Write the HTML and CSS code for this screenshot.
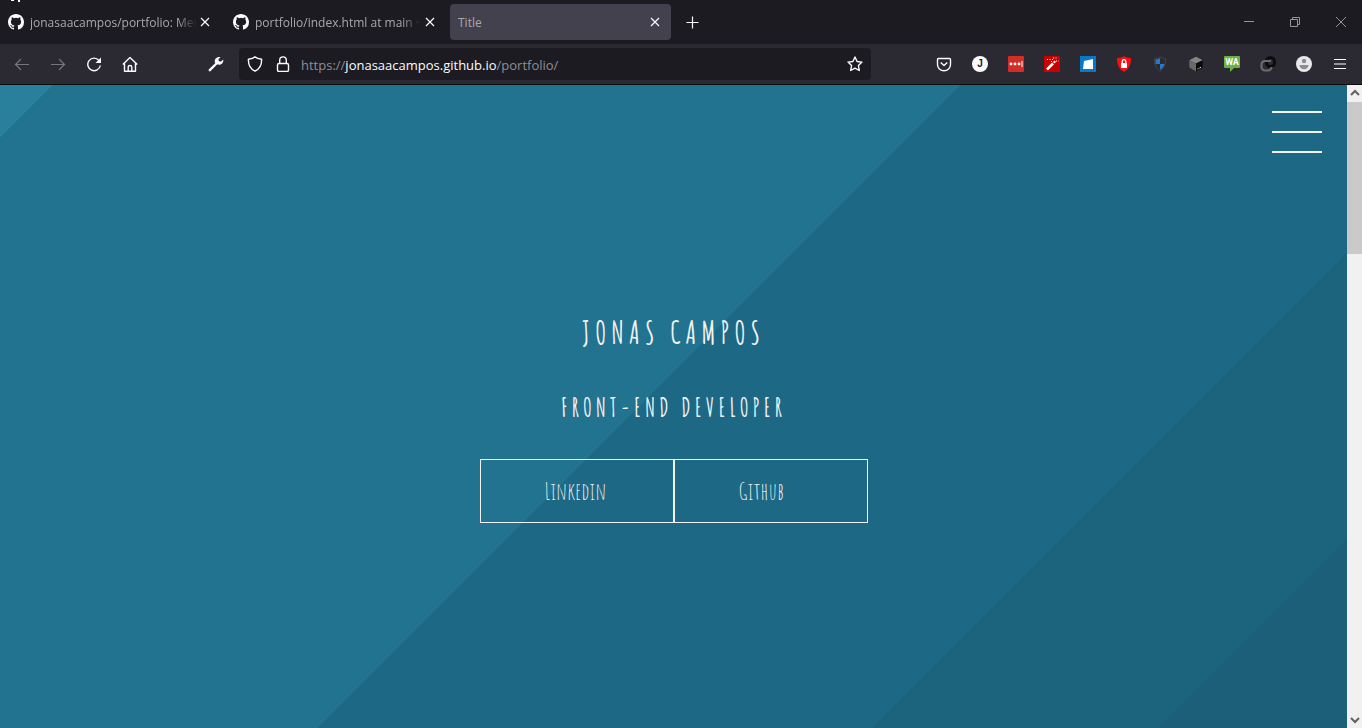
FILE: index.html
```html
<!DOCTYPE html>
<html lang="pt-BR">
<head>
<meta charset="utf-8">
<title>Title</title>
<link rel="stylesheet" href="styles.css">
</head>
<body>
<svg class="defs" aria-hidden="true">
  <symbol id="github" viewBox="0 0 16 16"><path fill="currentColor" d="M8 0C3.58 0 0 3.58 0 8c0 3.54 2.29 6.53 5.47 7.59.4.07.55-.17.55-.38 0-.19-.01-.82-.01-1.49-2.01.37-2.53-.49-2.69-.94-.09-.23-.48-.94-.82-1.13-.28-.15-.68-.52-.01-.53.63-.01 1.08.58 1.23.82.72 1.21 1.87.87 2.33.66.07-.52.28-.87.51-1.07-1.78-.2-3.64-.89-3.64-3.95 0-.87.31-1.59.82-2.15-.08-.2-.36-1.02.08-2.12 0 0 .67-.21 2.2.82a7.6 7.6 0 0 1 4 0c1.53-1.04 2.2-.82 2.2-.82.44 1.1.16 1.92.08 2.12.51.56.82 1.27.82 2.15 0 3.07-1.87 3.75-3.65 3.95.29.25.54.73.54 1.48 0 1.07-.01 1.93-.01 2.2 0 .21.15.46.55.38A8 8 0 0 0 16 8c0-4.42-3.58-8-8-8z"/></symbol>
  <symbol id="close" viewBox="0 0 16 16"><path class="line" d="M4 4l8 8M12 4l-8 8"/></symbol>
</svg>

<header class="browser">
  <svg class="edge-marks" viewBox="0 0 24 2" aria-hidden="true"><path fill="#fff" d="M11 0h3v1h-3zM18 0h2v2h-2z"/></svg>
  <div class="tabs">
    <div class="tab">
      <svg class="icon"><use href="#github"/></svg>
      <span class="tab-label faded">jonasaacampos/portfolio: Meu p</span>
      <button class="tab-close" aria-label="Close tab"><svg class="icon"><use href="#close"/></svg></button>
    </div>
    <div class="tab">
      <svg class="icon"><use href="#github"/></svg>
      <span class="tab-label faded">portfolio/index.html at main · jo</span>
      <button class="tab-close" aria-label="Close tab"><svg class="icon"><use href="#close"/></svg></button>
    </div>
    <div class="tab active">
      <span class="tab-label">Title</span>
      <button class="tab-close" aria-label="Close tab"><svg class="icon"><use href="#close"/></svg></button>
    </div>
    <button class="new-tab" aria-label="New tab"><svg class="icon" viewBox="0 0 16 16"><path class="line" d="M8.500 2.500v12M2.500 8.500h12"/></svg></button>
    <div class="window-controls">
      <button aria-label="Minimize"><svg class="icon" viewBox="0 0 16 16"><path class="hair" d="M3 7.500h10"/></svg></button>
      <button aria-label="Restore"><svg class="icon" viewBox="0 0 16 16"><path class="hair" d="M3.500 5.500h7v7h-7zM5.500 5.500v-2h7v7h-2"/></svg></button>
      <button aria-label="Close window"><svg class="icon" viewBox="0 0 16 16"><path class="hair" d="M3 3l10 10M13 3L3 13"/></svg></button>
    </div>
  </div>

  <div class="toolbar">
    <div class="nav">
      <button class="dim" aria-label="Back"><svg class="icon" viewBox="0 0 16 16"><path class="line" d="M15 8.500H1.500M7 3L1.500 8.500 7 14"/></svg></button>
      <button class="dim" aria-label="Forward"><svg class="icon" viewBox="0 0 16 16"><path class="line" d="M1 8.500h13.500M9 3L14.500 8.500 9 14"/></svg></button>
      <button aria-label="Reload"><svg class="icon" viewBox="0 0 16 16"><path class="bold" d="M13 4.500A6.300 6.300 0 1 0 14.300 9.500"/><path fill="currentColor" d="M15 1.500V7H9.500z"/></svg></button>
      <button aria-label="Home"><svg class="icon" viewBox="0 0 16 16"><path class="bold" d="M.8 8.500L8 1.500l7.200 7M2.500 7.500v7.800h11V7.500M6.200 15v-3.700a1.800 1.800 0 0 1 3.600 0V15"/></svg></button>
    </div>
    <button class="wrench" aria-label="Developer tools"><svg class="icon" viewBox="0 0 16 16"><path d="M1.800 14.200L9 7" fill="none" stroke="currentColor" stroke-width="2.400" stroke-linecap="round"/><path fill="currentColor" d="M12.500 1.200L10.500 3l.3 2.300 2.300.3 2.100-2.100c.7 3.400-2.400 6.400-6 4.800L6.900 6.400C6 3 9 .5 12.500 1.200z"/></svg></button>
    <div class="urlbar">
      <svg class="icon" viewBox="0 0 16 16"><path class="bold" d="M8 .9c1.500 1.300 3.700 2 6.600 2.300C14.800 8.500 13 12.800 8 15.200 3 12.800 1.200 8.500 1.400 3.200 4.300 2.900 6.500 2.200 8 .9z"/></svg>
      <svg class="icon" viewBox="0 0 16 16"><rect class="bold" x="2.500" y="7.500" width="11" height="8" rx="1.500"/><path class="bold" d="M4.700 7.500V4.200a3.300 3.300 0 0 1 6.600 0v3.300"/></svg>
      <span class="url">https://<b>jonasaacampos.github.io</b>/portfolio/</span>
      <button aria-label="Bookmark"><svg class="icon" viewBox="0 0 16 16"><path class="bold" d="M8 1l2.100 4.500 4.900.6-3.600 3.400.9 5L8 12.100l-4.300 2.400.9-5L1 6.100l4.900-.6z"/></svg></button>
    </div>
    <div class="extensions">
      <button aria-label="Pocket"><svg class="icon" viewBox="0 0 16 16"><path class="bold" d="M2.500 2.500h11q1 0 1 1V8.500a6.500 6.200 0 0 1-13 0V3.500q0-1 1-1zM4.700 6.500L8 9.600l3.300-3.100"/></svg></button>
      <button aria-label="J"><span class="account">J</span></button>
      <button aria-label="Passwords"><svg class="icon" viewBox="0 0 16 16"><rect width="16" height="16" rx="1" fill="#d32d27"/><g fill="#fff"><circle cx="3" cy="8" r="1.400"/><circle cx="7" cy="8" r="1.400"/><circle cx="11" cy="8" r="1.400"/><path d="M13.500 5h1v6h-1z"/></g></svg></button>
      <button aria-label="Wand"><svg class="icon" viewBox="0 0 16 16"><path fill="#c70000" d="M0 0h16v16H0z"/><path stroke="#fff" stroke-width="2.500" d="M3 13.500l6-6"/><path stroke="#fff" stroke-width="2" d="M9.700 6.800l1.600-1.600"/><path stroke="#fff" stroke-dasharray="1 1.500" d="M3 3.500h7M7 5.500h2M9 2h5M12 5h3"/></svg></button>
      <button aria-label="Page tool"><svg class="icon" viewBox="0 0 16 16"><path fill="#0878c7" d="M0 0h16v16H0z"/><path fill="#fff" d="M4 5l9-2v10H3z"/></svg></button>
      <button aria-label="Privacy lock"><svg class="icon" viewBox="0 0 16 16"><path fill="#f80d12" d="M8 0c2 1.400 4.500 1.900 7 2 .2 6-1.800 11-7 14C2.800 13 .8 8 1 2c2.500-.1 5-.6 7-2z"/><path fill="#fff" d="M5 7h6v5H5z"/><path fill="none" stroke="#fff" stroke-width="1.300" d="M6.200 7V5.500a1.800 1.800 0 0 1 3.600 0V7"/></svg></button>
      <button aria-label="Shield"><svg class="icon" viewBox="0 0 16 16"><path fill="#2b2c32" stroke="#42454a" d="M8 .8c2 1.300 3.500 1.500 5.500 1.600.2 5.600-1 9.800-5.500 12.800C3.500 12.200 2.300 8 2.500 2.400 4.500 2.300 6 2.100 8 .8z"/><path fill="#2677cf" d="M8 2v6H3.500V3.500C5.500 3.400 6.500 3 8 2zM8 8h4.500c-.5 2.500-2 4.500-4.500 6z"/></svg></button>
      <button aria-label="Cube"><svg class="icon" viewBox="0 0 16 16"><path fill="#858585" d="M8 .8l6.700 3.400L8 7.500 1.300 4.200z"/><path fill="#696969" d="M1.300 4.200L8 7.500v8l-6.700-4z"/><path fill="#0b0b0b" d="M14.700 4.200L8 7.500v8l6.700-4z"/><path stroke="#ddd" d="M9.500 13l1-.5M11.500 12l1.500-.8"/></svg></button>
      <button aria-label="WA"><span class="bubble">WA</span></button>
      <button aria-label="Links"><svg class="icon" viewBox="0 0 16 16"><rect x="6.500" y="1.500" width="8" height="9" rx="4" fill="none" stroke="#0c0c0d" stroke-width="3"/><path fill="none" stroke="#6c6c6e" stroke-width="2.200" d="M11 5H5a3.500 3.500 0 0 0-3.500 3.500V11A3.500 3.500 0 0 0 5 14.500h3a3.500 3.500 0 0 0 3.500-3.500"/></svg></button>
      <button aria-label="Profile"><svg class="icon" viewBox="0 0 16 16"><circle cx="8" cy="8" r="8" fill="#e9e9ed"/><circle cx="8" cy="5" r="2.200" fill="#8d8d90"/><path fill="#8d8d90" d="M3.500 9h9c0 2.500-2 4.200-4.500 4.200S3.500 11.500 3.500 9z"/></svg></button>
      <button aria-label="Menu"><svg class="icon" viewBox="0 0 16 16"><path class="line" d="M2 3.500h12M2 8h12M2 12.500h12"/></svg></button>
    </div>
  </div>
</header>

<div class="viewport">
  <main class="hero">
    <button class="menu" aria-label="Menu"><span></span><span></span><span></span></button>
    <h1>JONAS CAMPOS</h1>
    <h2>FRONT-END DEVELOPER</h2>
    <nav class="links">
      <a href="#linkedin">Linkedin</a>
      <a href="#github-profile">Github</a>
    </nav>
  </main>
  <div class="scrollbar">
    <svg class="arrow" viewBox="0 0 15 17"><path d="M4 10l4-4 4 4"/></svg>
    <div class="track"><div class="thumb"></div></div>
    <svg class="arrow" viewBox="0 0 15 17"><path d="M4 7l4 4 4-4"/></svg>
  </div>
</div>
</body>
</html>
```
FILE: styles.css
```css
* { box-sizing: border-box; }

body {
  margin: 0;
  height: 100vh;
  display: flex;
  flex-direction: column;
  overflow: hidden;
  background: #1c1b22;
  color: #fbfbfe;
  font-family: "Open Sans", "Noto Sans", sans-serif;
}

button {
  display: flex;
  align-items: center;
  justify-content: center;
  padding: 0;
  border: 0;
  background: none;
  color: inherit;
  font: inherit;
}

.defs { display: none; }
.icon { display: block; flex: none; width: 16px; height: 16px; }
.line { fill: none; stroke: currentColor; stroke-width: 1.2; }
.bold { fill: none; stroke: currentColor; stroke-width: 1.4; stroke-linejoin: round; }
.hair { fill: none; stroke: currentColor; stroke-width: 1; }

.edge-marks { position: absolute; top: 0; left: 0; width: 24px; height: 2px; }

.tabs {
  display: flex;
  align-items: center;
  height: 44px;
}

.tab {
  display: flex;
  align-items: center;
  flex: 0 1 225px;
  min-width: 0;
  height: 36px;
  padding: 0 12px 0 8px;
  gap: 6px;
  font-size: 12px;
  color: #a9a8ad;
}
.tab > .icon { color: #fbfbfe; }
.tab.active {
  flex-basis: 221px;
  padding-right: 8px;
  border-radius: 4px;
  background: #42414d;
}
.tab-label {
  flex: 1;
  min-width: 0;
  overflow: hidden;
  white-space: nowrap;
}
.faded { mask-image: linear-gradient(to left, transparent, #000 20px); }
.tab-close { margin-left: -6px; color: #fbfbfe; }
.new-tab { width: 42px; height: 36px; }

.window-controls {
  display: flex;
  margin: 0 -2px 0 auto;
  color: #949397;
}
.window-controls button { width: 46px; height: 44px; }

.toolbar {
  display: flex;
  align-items: center;
  height: 41px;
  padding-right: 4px;
  background: #2b2a33;
  border-bottom: 1px solid #0c0c0d;
}

.nav { display: flex; padding-left: 4px; }
.nav button, .wrench, .extensions button { width: 36px; height: 32px; }
.dim { color: #77767c; }
.wrench { margin: 0 5px 0 50px; }

.urlbar {
  display: flex;
  align-items: center;
  flex: 0 1 632px;
  gap: 12px;
  height: 32px;
  padding: 0 8px;
  border-radius: 4px;
  background: #1c1b22;
}
.url {
  flex: 1;
  margin-left: -2px;
  padding-top: 2px;
  font-size: 13px;
  color: #8f8e93;
}
.url b { font-weight: 400; color: #fbfbfe; }

.extensions { display: flex; margin-left: auto; }

.account {
  width: 16px;
  border-radius: 50%;
  background: #fbfbfe;
  color: #1c1b22;
  font: 700 10px/16px "Liberation Sans", sans-serif;
  text-align: center;
}
.bubble {
  position: relative;
  width: 16px;
  margin-bottom: 4px;
  border-radius: 1px;
  background: #67b345;
  color: #fff;
  font: 700 9px/12px Roboto, sans-serif;
  text-align: center;
}
.bubble::after {
  content: "";
  position: absolute;
  left: 6px;
  top: 12px;
  border-top: 4px solid #67b345;
  border-right: 4px solid transparent;
}

.viewport { display: flex; flex: 1; min-height: 0; }

.hero {
  position: relative;
  flex: 1;
  display: flex;
  flex-direction: column;
  align-items: center;
  justify-content: center;
  padding-top: 18px;
  background: linear-gradient(135deg, #29809c 37px, #227390 37px 679px, #1d6885 679px 1071px, #1c637d 1071px 1273px, #1c5f79 1273px);
  color: #f2f2f2;
  font-family: "Amatic SC", "Roboto Condensed", Roboto, sans-serif;
}

.menu {
  position: absolute;
  top: 26px;
  right: 25px;
  flex-direction: column;
  gap: 18px;
}
.menu span { width: 50px; height: 2px; background: #f2f2f2; }

h1, h2 { margin: 0; font-weight: 700; }
h1 { font-size: 31px; line-height: 48px; letter-spacing: 5px; }
h2 { margin: 32px 0; font-size: 25px; line-height: 38px; letter-spacing: 4px; }

.links { display: flex; }
.links a {
  width: 194px;
  padding: 12px 64px;
  border: 1px solid #f2f2f2;
  color: inherit;
  font-size: 24px;
  line-height: 38px;
  text-decoration: none;
}

.scrollbar {
  display: flex;
  flex-direction: column;
  width: 15px;
  background: #f1f1f1;
}
.arrow { width: 15px; height: 17px; fill: none; stroke: #606066; stroke-width: 2; }
.track { flex: 1; }
.thumb { height: 25%; background: #cacaca; }
```
